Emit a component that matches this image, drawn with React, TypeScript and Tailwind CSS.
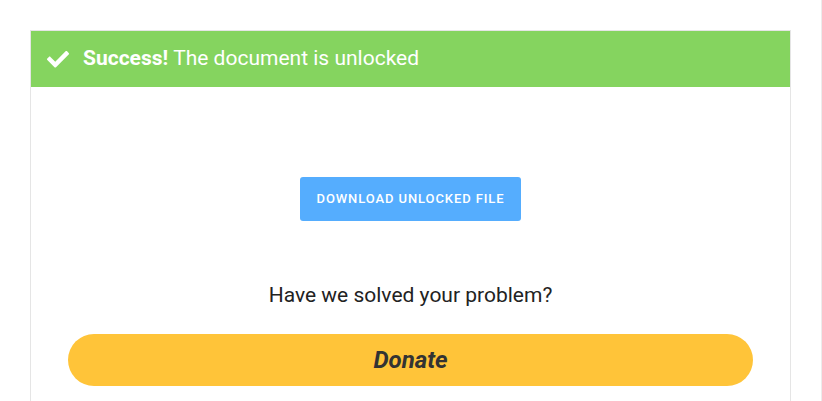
import React from "react";

export default function App() {
  return (
    <div className="w-[822px] h-[401px] bg-white overflow-hidden flex" style={{ fontFamily: "Roboto, 'Liberation Sans', sans-serif" }}>
      <div className="flex-1 pl-[30px] pt-[30px] pr-[30px]">
        <div className="w-[761px] h-[400px] border border-[#e5e5e5] flex flex-col items-center">
          <div className="w-full h-[56px] bg-[#85d45f] flex items-center pl-[16px] text-white text-[21px]">
            <svg width="22" height="18" viewBox="0 0 512 400" className="mr-[14px]" fill="white">
              <path d="M173.9 389.4L7.5 223c-10-10-10-26.2 0-36.2l36.2-36.2c10-10 26.2-10 36.2 0L192 262.7 432.1 22.5c10-10 26.2-10 36.2 0l36.2 36.2c10 10 10 26.2 0 36.2L210.1 389.4c-10 10-26.2 10-36.2 0z" />
            </svg>
            <span className="font-bold">Success!</span>
            <span className="ml-[5px]">The document is unlocked</span>
          </div>
          <button className="mt-[90px] w-[221px] h-[44px] rounded-[3px] bg-[#55adfe] text-white text-[13px] font-medium uppercase tracking-[0.9px]">
            Download unlocked file
          </button>
          <div className="mt-[62px] text-[21px] text-[#222] leading-[24px]">Have we solved your problem?</div>
          <button className="mt-[27px] w-[685px] h-[52px] rounded-full bg-[#ffc439] text-[#333] text-[24px] font-bold italic">
            Donate
          </button>
        </div>
      </div>
      <div className="w-px h-full bg-[#ececec]" />
    </div>
  );
}
